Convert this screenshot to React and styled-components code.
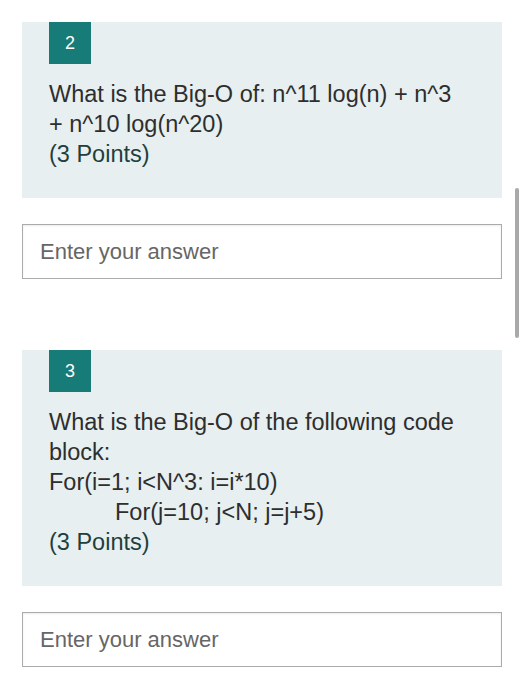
import React from "react";
import styled, {createGlobalStyle} from "styled-components";

const GlobalStyle = createGlobalStyle`
    html, body {
        margin: 0;
        padding: 0;
        background: #fff;
    }
    body {
        font-family: "Liberation Sans", Arial, sans-serif;
    }
`

const Page = styled.div`
    position: relative;
    padding: 22px 23px 30px 22px;
    height: 700px;
    box-sizing: border-box;
    overflow: hidden;
`

const QuestionCard = styled.div`
    background-color: #e7eff0;
    padding: 0 38px 29px 27px;
`

const Badge = styled.div`
    width: 42px;
    height: 42px;
    background-color: #177b78;
    color: #fff;
    font-size: 18px;
    display: flex;
    align-items: center;
    justify-content: center;
`

const QuestionText = styled.div`
    margin-top: 15px;
    font-size: 23.5px;
    line-height: 30px;
    color: #2e2e2e;
`

const CodeLine = styled.span`
    display: block;
    padding-left: ${({indent}) => indent || 0}px;
`

const Points = styled.div`
    color: #1f3f3c;
`

const AnswerInput = styled.input`
    display: block;
    width: 100%;
    box-sizing: border-box;
    height: 55px;
    margin-top: 26px;
    margin-bottom: ${({last}) => last ? '0' : '71px'};
    border: 1px solid #ababab;
    box-shadow: inset 0 1px 2px rgba(0, 0, 0, 0.08);
    background: #fff;
    padding: 0 17px;
    font-family: "Liberation Sans", Arial, sans-serif;
    font-size: 22px;
    color: #333;
    outline: none;
    &::placeholder {
        color: #666;
    }
`

const ScrollThumb = styled.div`
    position: absolute;
    left: 515px;
    top: 188px;
    width: 4px;
    height: 150px;
    border-radius: 2px;
    background-color: #a9a9a9;
`

const questions = [
    {
        n: 2,
        lines: [{text: "What is the Big-O of: n^11 log(n) + n^3 + n^10 log(n^20)"}],
    },
    {
        n: 3,
        lines: [
            {text: "What is the Big-O of the following code block:"},
            {text: "For(i=1; i<N^3: i=i*10)"},
            {text: "For(j=10; j<N; j=j+5)", indent: 66},
        ],
    },
]

export default function App() {
    return (
        <>
            <GlobalStyle/>
            <Page>
                {questions.map((q, i) => (
                    <React.Fragment key={q.n}>
                        <QuestionCard>
                            <Badge>{q.n}</Badge>
                            <QuestionText>
                                {q.lines.map((l, j) => (
                                    <CodeLine key={j} indent={l.indent}>{l.text}</CodeLine>
                                ))}
                                <Points>(3 Points)</Points>
                            </QuestionText>
                        </QuestionCard>
                        <AnswerInput placeholder="Enter your answer" last={i === questions.length - 1}/>
                    </React.Fragment>
                ))}
                <ScrollThumb/>
            </Page>
        </>
    )
}
